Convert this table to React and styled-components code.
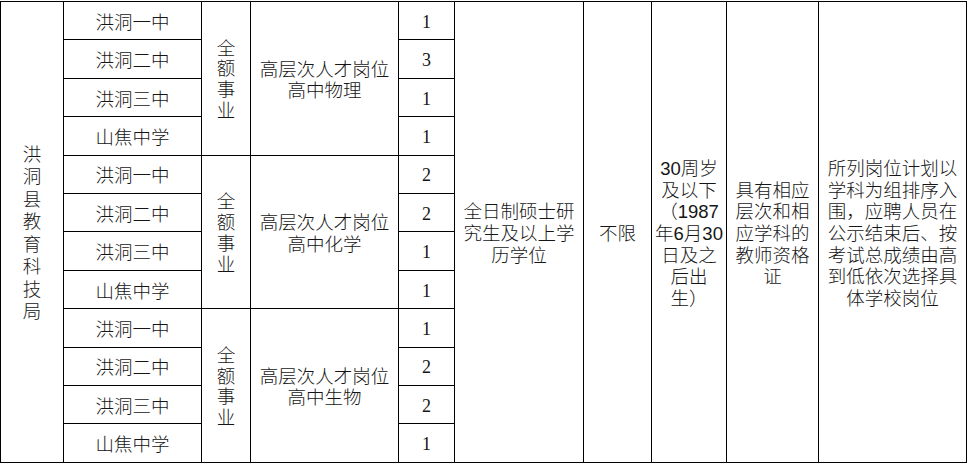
import React from "react";
import styled, { createGlobalStyle } from "styled-components";

const GlobalStyle = createGlobalStyle`
  html, body {
    margin: 0;
    padding: 0;
    background: #ffffff;
  }
  body {
    font-family: "Liberation Sans", "Noto Sans CJK SC", sans-serif;
  }
`;

const Page = styled.div`
  padding-top: 1px;
  width: 967px;
`;

const Grid = styled.table`
  border-collapse: collapse;
  table-layout: fixed;
  width: 966px;
  height: 461px;
  font-size: 18.5px;
  font-weight: 300;
  color: #151515;
`;

const Col = styled.col`
  width: ${(p) => p.$w}px;
`;

const Row = styled.tr`
  height: 38.4px;
`;

const Cell = styled.td`
  border: 1px solid #000;
  padding: 4px 0 0 0;
  text-align: center;
  vertical-align: middle;
  line-height: 21.7px;
  white-space: nowrap;
  overflow: hidden;
`;

const NumCell = styled(Cell)`
  font-family: "Liberation Serif", "Times New Roman", serif;
  font-size: 18px;
  font-weight: 400;
`;

const Stack = styled.div`
  width: 1em;
  margin: 0 auto;
  white-space: normal;
  line-height: ${(p) => p.$lh}px;
`;

const Lines = ({ items }) =>
  items.map((t, i) => (
    <React.Fragment key={i}>
      {i > 0 && <br />}
      {t}
    </React.Fragment>
  ));

const groups = [
  { subject: "高中物理", counts: ["1", "3", "1", "1"] },
  { subject: "高中化学", counts: ["2", "2", "1", "1"] },
  { subject: "高中生物", counts: ["1", "2", "2", "1"] },
];

const schools = ["洪洞一中", "洪洞二中", "洪洞三中", "山焦中学"];

export default function App() {
  return (
    <Page>
      <GlobalStyle />
      <Grid>
        <colgroup>
          <Col $w={63} />
          <Col $w={138} />
          <Col $w={49} />
          <Col $w={148} />
          <Col $w={56} />
          <Col $w={129} />
          <Col $w={68} />
          <Col $w={75} />
          <Col $w={92} />
          <Col $w={148} />
        </colgroup>
        <tbody>
          {groups.map((g, gi) =>
            schools.map((s, si) => (
              <Row key={`${gi}-${si}`}>
                {gi === 0 && si === 0 && (
                  <Cell rowSpan={12}>
                    <Stack $lh={22.5}>洪洞县教育科技局</Stack>
                  </Cell>
                )}
                <Cell>{s}</Cell>
                {si === 0 && (
                  <Cell rowSpan={4}>
                    <Stack $lh={20.8}>全额事业</Stack>
                  </Cell>
                )}
                {si === 0 && (
                  <Cell rowSpan={4}>
                    <Lines items={["高层次人才岗位", g.subject]} />
                  </Cell>
                )}
                <NumCell>{g.counts[si]}</NumCell>
                {gi === 0 && si === 0 && (
                  <>
                    <Cell rowSpan={12}>
                      <Lines items={["全日制硕士研", "究生及以上学", "历学位"]} />
                    </Cell>
                    <Cell rowSpan={12}>不限</Cell>
                    <Cell rowSpan={12}>
                      <Lines
                        items={[
                          "30周岁",
                          "及以下",
                          "（1987",
                          "年6月30",
                          "日及之",
                          "后出",
                          "生）",
                        ]}
                      />
                    </Cell>
                    <Cell rowSpan={12}>
                      <Lines
                        items={["具有相应", "层次和相", "应学科的", "教师资格", "证"]}
                      />
                    </Cell>
                    <Cell rowSpan={12}>
                      <Lines
                        items={[
                          "所列岗位计划以",
                          "学科为组排序入",
                          "围，应聘人员在",
                          "公示结束后、按",
                          "考试总成绩由高",
                          "到低依次选择具",
                          "体学校岗位",
                        ]}
                      />
                    </Cell>
                  </>
                )}
              </Row>
            ))
          )}
        </tbody>
      </Grid>
    </Page>
  );
}
